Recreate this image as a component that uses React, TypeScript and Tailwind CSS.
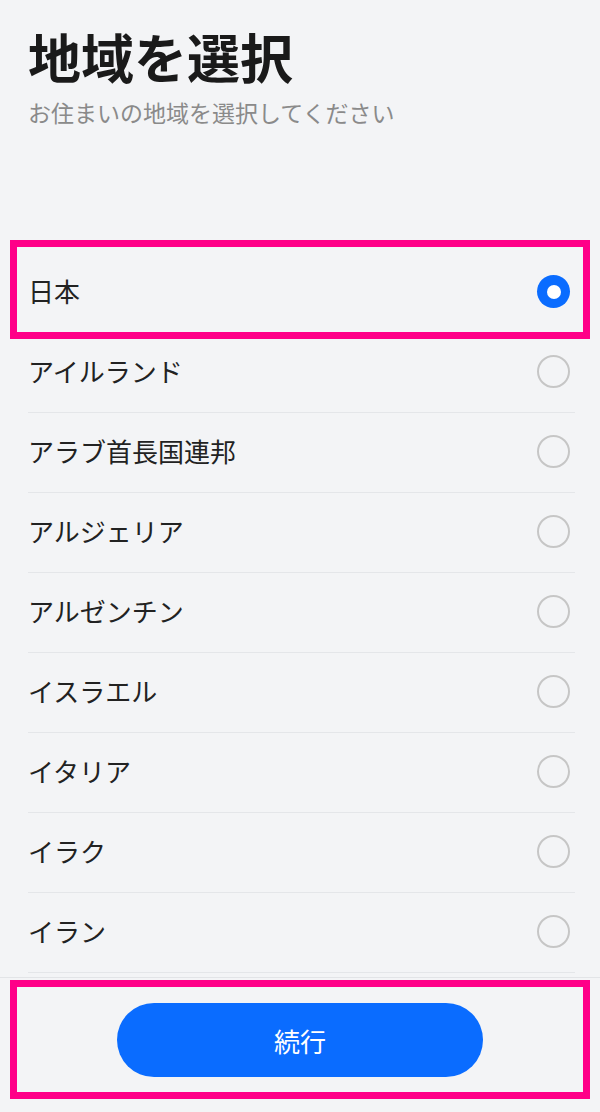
import React, { useState } from 'react';

const regions = ['日本', 'アイルランド', 'アラブ首長国連邦', 'アルジェリア', 'アルゼンチン', 'イスラエル', 'イタリア', 'イラク', 'イラン'];

const font = { fontFamily: '"Noto Sans CJK JP", "Noto Sans", sans-serif' };

const Radio: React.FC<{ checked: boolean }> = ({ checked }) =>
  checked ? (
    <span className="flex h-[33px] w-[33px] items-center justify-center rounded-full bg-[#0a6cff]">
      <span className="block h-[14px] w-[14px] rounded-full bg-white" />
    </span>
  ) : (
    <span className="block h-[33px] w-[33px] rounded-full border-2 border-[#c6c6c6]" />
  );

const App: React.FC = () => {
  const [selected, setSelected] = useState('日本');

  return (
    <div className="relative flex h-[1112px] w-[600px] flex-col overflow-hidden bg-[#f3f4f6]" style={font}>
      {/* Header */}
      <div className="h-[253px] shrink-0 px-[28px] pt-[24px]">
        <h1 className="text-[53px] font-bold leading-[65px] text-[#1a1a1a]">地域を選択</h1>
        <p className="mt-[7px] text-[23px] leading-[32px] text-[#8a8a8a]">お住まいの地域を選択してください</p>
      </div>

      {/* List */}
      <div className="min-h-0 flex-1 overflow-hidden pl-[28px] pr-[25px]">
        {regions.map((r) => (
          <button
            key={r}
            onClick={() => setSelected(r)}
            className="flex h-[80px] w-full items-center justify-between border-b border-[#e4e6e9] text-left"
          >
            <span className="-mt-[3px] text-[26px] leading-[36px] text-[#222]">{r}</span>
            <span className="mr-[5px] -mt-[2px]">
              <Radio checked={selected === r} />
            </span>
          </button>
        ))}
      </div>

      {/* Footer */}
      <div className="shrink-0 border-t border-[#e2e4e7] pt-[25px] pb-[35px]">
        <button className="mx-auto flex h-[74px] w-[366px] items-center justify-center rounded-full bg-[#0a6cff] text-[26px] text-white">
          続行
        </button>
      </div>

      {/* annotation boxes */}
      <div className="pointer-events-none absolute left-[10px] top-[240px] h-[99px] w-[580px] border-[7px] border-[#ff0088]" />
      <div className="pointer-events-none absolute left-[10px] top-[980px] h-[119px] w-[580px] border-[7px] border-[#ff0088]" />
    </div>
  );
};

export default App;
